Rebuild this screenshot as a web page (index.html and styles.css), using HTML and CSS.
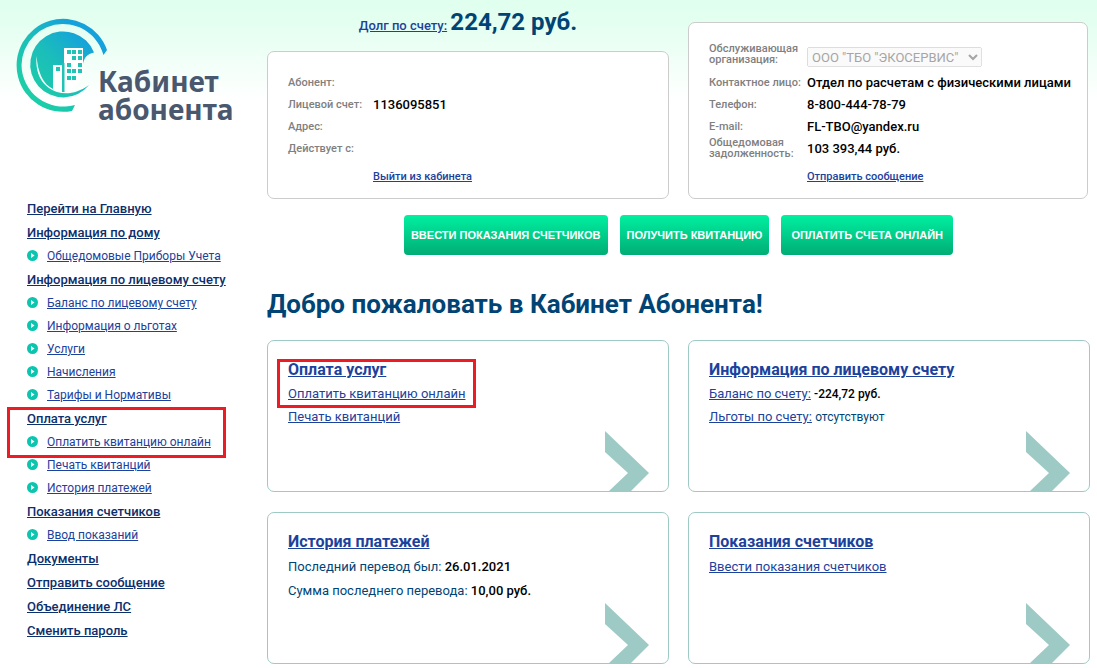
FILE: index.html
```html
<!DOCTYPE html>
<html lang="ru">
<head>
<meta charset="utf-8">
<title>Кабинет абонента</title>
<link rel="stylesheet" href="styles.css">
</head>
<body>
<div class="page">
  <aside class="sidebar">
    <svg class="logo" viewBox="0 0 240 115" role="img" aria-label="Кабинет абонента">
      <defs>
        <linearGradient id="brand" gradientUnits="userSpaceOnUse" x1="84" y1="22" x2="30" y2="76">
          <stop offset="0" stop-color="#14a1dc"/>
          <stop offset="0.5" stop-color="#1bbdbb"/>
          <stop offset="1" stop-color="#1bcda8"/>
        </linearGradient>
      </defs>
      <path fill="url(#brand)" d="M103.500 42 L107 37 A46.500 46.500 0 1 0 72 98 L75 92 A42 42 0 0 1 21.500 52 A41.500 41.500 0 0 1 62.500 11 C82 11 98 23 103.500 42Z"/>
      <path fill="url(#brand)" d="M94 39.500 A33 33 0 1 0 89 72 C78 80 67 82 57 79 C43 74 35 62 36.500 43 C38 60 43 71 53 76 L53 52 L62 52 L62 79 L64.500 79 L64.500 35 L83 35 L83 51 C84 45 87 41 94 39.500Z"/>
      <path fill="#fff" d="M53 52h9v27q-5 0-9-3zM64 35h19v25q-4 15-19 19z"/>
      <path fill="#20c3b4" d="M62 50h2.500v29H62z"/>
      <g fill="#20c3b4">
        <path d="M56 54h4v4h-4zM67 37h4v4h-4zM72 37h4v4h-4zM78 37h4v4h-4zM72 43h4v4h-4zM78 43h4v4h-4zM67 50h4v4h-4zM78 50h4v4h-4zM67 56h4v4h-4zM72 56h4v4h-4zM78 56h4v4h-4zM67 63h4v4h-4zM72 63h4v4h-4z"/>
      </g>
      <text class="logo-text" x="98" y="79">Кабинет</text>
      <text class="logo-text" x="98" y="107">абонента</text>
    </svg>
    <svg class="symbols" aria-hidden="true">
      <symbol id="bullet" viewBox="0 0 11 11"><circle cx="5.500" cy="5.500" r="5.500" fill="#0cc5ae"/><path d="M4 3 7.500 5.500 4 8z" fill="#fff"/></symbol>
    </svg>
    <nav class="menu">
      <div class="group"><a class="head" href="#">Перейти на Главную</a></div>
      <div class="group">
        <a class="head" href="#">Информация по дому</a>
        <div class="item"><svg class="bullet"><use href="#bullet"/></svg><a href="#">Общедомовые Приборы Учета</a></div>
      </div>
      <div class="group">
        <a class="head" href="#">Информация по лицевому счету</a>
        <div class="item"><svg class="bullet"><use href="#bullet"/></svg><a href="#">Баланс по лицевому счету</a></div>
        <div class="item"><svg class="bullet"><use href="#bullet"/></svg><a href="#">Информация о льготах</a></div>
        <div class="item"><svg class="bullet"><use href="#bullet"/></svg><a href="#">Услуги</a></div>
        <div class="item"><svg class="bullet"><use href="#bullet"/></svg><a href="#">Начисления</a></div>
        <div class="item"><svg class="bullet"><use href="#bullet"/></svg><a href="#">Тарифы и Нормативы</a></div>
      </div>
      <div class="group">
        <span class="mark mark-menu"></span>
        <a class="head" href="#">Оплата услуг</a>
        <div class="item"><svg class="bullet"><use href="#bullet"/></svg><a href="#">Оплатить квитанцию онлайн</a></div>
        <div class="item"><svg class="bullet"><use href="#bullet"/></svg><a href="#">Печать квитанций</a></div>
        <div class="item"><svg class="bullet"><use href="#bullet"/></svg><a href="#">История платежей</a></div>
      </div>
      <div class="group">
        <a class="head" href="#">Показания счетчиков</a>
        <div class="item"><svg class="bullet"><use href="#bullet"/></svg><a href="#">Ввод показаний</a></div>
      </div>
      <div class="group"><a class="head" href="#">Документы</a></div>
      <div class="group"><a class="head" href="#">Отправить сообщение</a></div>
      <div class="group"><a class="head" href="#">Объединение ЛС</a></div>
      <div class="group"><a class="head" href="#">Сменить пароль</a></div>
    </nav>
  </aside>
  <main class="main">
    <div class="top">
      <div class="account">
        <p class="debt"><a href="#">Долг по счету:</a> <strong>224,72 руб.</strong></p>
        <section class="panel panel-account">
          <dl class="info">
            <dt>Абонент:</dt><dd></dd>
            <dt>Лицевой счет:</dt><dd>1136095851</dd>
            <dt>Адрес:</dt><dd></dd>
            <dt>Действует с:</dt><dd></dd>
          </dl>
          <a class="panel-link" href="#">Выйти из кабинета</a>
        </section>
      </div>
      <section class="panel panel-company">
        <dl class="info">
          <dt class="tall"><label for="org">Обслуживающая организация:</label></dt>
          <dd class="tall"><select id="org" class="org" disabled><option>ООО "ТБО "ЭКОСЕРВИС"</option></select></dd>
          <dt>Контактное лицо:</dt><dd>Отдел по расчетам с физическими лицами</dd>
          <dt>Телефон:</dt><dd>8-800-444-78-79</dd>
          <dt>E-mail:</dt><dd>FL-TBO@yandex.ru</dd>
          <dt>Общедомовая задолженность:</dt><dd>103 393,44 руб.</dd>
        </dl>
        <a class="panel-link" href="#">Отправить сообщение</a>
      </section>
    </div>
    <div class="actions">
      <button type="button">ВВЕСТИ ПОКАЗАНИЯ СЧЕТЧИКОВ</button>
      <button type="button">ПОЛУЧИТЬ КВИТАНЦИЮ</button>
      <button type="button" class="pay">ОПЛАТИТЬ СЧЕТА ОНЛАЙН</button>
    </div>
    <h1>Добро пожаловать в Кабинет Абонента!</h1>
    <div class="cards">
      <section class="card">
        <span class="mark mark-card"></span>
        <h2><a href="#">Оплата услуг</a></h2>
        <p><a href="#">Оплатить квитанцию онлайн</a></p>
        <p><a href="#">Печать квитанций</a></p>
        <svg class="arrow" viewBox="0 0 44 60"><path d="M0 0 44 42 26 60H4L23 42 0 21z"/></svg>
      </section>
      <section class="card">
        <h2><a href="#">Информация по лицевому счету</a></h2>
        <p><a href="#">Баланс по счету:</a> <b class="value">-224,72 руб.</b></p>
        <p><a href="#">Льготы по счету:</a> <span class="value">отсутствуют</span></p>
        <svg class="arrow" viewBox="0 0 44 60"><path d="M0 0 44 42 26 60H4L23 42 0 21z"/></svg>
      </section>
      <section class="card spaced">
        <h2><a href="#">История платежей</a></h2>
        <p>Последний перевод был: <b>26.01.2021</b></p>
        <p>Сумма последнего перевода: <b>10,00 руб.</b></p>
        <svg class="arrow" viewBox="0 0 44 60"><path d="M0 0 44 42 26 60H4L23 42 0 21z"/></svg>
      </section>
      <section class="card spaced">
        <h2><a href="#">Показания счетчиков</a></h2>
        <p><a href="#">Ввести показания счетчиков</a></p>
        <svg class="arrow" viewBox="0 0 44 60"><path d="M0 0 44 42 26 60H4L23 42 0 21z"/></svg>
      </section>
    </div>
  </main>
</div>
</body>
</html>
```
FILE: styles.css
```css
* { box-sizing: border-box; }
body {
  margin: 0;
  background: #fff linear-gradient(#e0ffef, #e4fff1 24px, #fff 100px) no-repeat;
  font: 13px/23px Roboto, "Liberation Sans", sans-serif;
  color: #004475;
}
a { color: #1c429c; text-decoration: underline; }
p, h1, h2, dl, dd { margin: 0; }
.page { display: flex; }
.sidebar { flex: 0 0 267px; padding-top: 13px; }
.logo { display: block; width: 240px; height: 115px; margin-bottom: 69px; }
.logo-text { font: 700 28px/28px "Noto Sans", sans-serif; fill: #4a586f; }
.symbols { display: none; }
.menu { padding-left: 27px; }
.group { position: relative; }
.head { display: block; line-height: 24px; font-weight: 500; color: #0d2f6c; }
.item { display: flex; gap: 9px; font-size: 12px; line-height: 23px; }
.bullet { flex: none; width: 11px; height: 11px; margin-top: 5px; }
.mark { position: absolute; border: 3px solid #ed1c24; pointer-events: none; }
.mark-menu { left: -20px; top: 0; width: 219px; height: 51px; }
.mark-card { left: 9px; top: 18px; width: 199px; height: 49px; }

.main { flex: 1; min-width: 0; padding-right: 7px; }
.top { display: grid; grid-template-columns: 1fr 1fr; gap: 19px; }
.account { display: flex; flex-direction: column; }
.debt { height: 51px; padding-top: 6px; line-height: 32px; text-align: center; }
.debt strong { font-size: 24px; font-weight: 700; }
.debt a { font-weight: 500; }
.panel { border: 1px solid #ccc; border-radius: 7px; background: #fff; padding: 0 14px 10px 20px; }
.panel-account { flex: 1; padding-top: 20px; }
.panel-company { margin: 22px 2px 0 0; padding-top: 17px; }
.info { display: grid; grid-template-columns: 85px 1fr; grid-auto-rows: 22px; align-items: center; }
.panel-company .info { grid-template-columns: 98px 1fr; grid-template-rows: 32px; }
.info dt { padding-bottom: 2px; font-size: 11px; line-height: 11px; font-weight: 500; color: #808080; }
.info dd { line-height: 22px; font-weight: 500; color: #000; }
.info .tall { height: 32px; padding-top: 3px; }
.info dd.tall { display: flex; align-items: flex-end; padding-bottom: 5px; }
.org { width: 175px; height: 20px; font: 13px Roboto, sans-serif; }
.panel-link { display: block; margin: 6px 0 0 85px; font-size: 11px; line-height: 22px; font-weight: 500; }
.panel-company .panel-link { margin-left: 98px; }

.actions { display: flex; justify-content: center; gap: 12px; margin-top: 16px; }
.actions button {
  height: 40px; padding: 0 7px; border: 0; border-radius: 4px;
  background: linear-gradient(#00f0a0, #00ad75); color: #fff;
  font: 700 11px "Liberation Sans", Arial, sans-serif;
}
.actions .pay { padding: 0 10px; }
h1 { margin: 33px 0 19px; font-size: 26px; line-height: 33px; font-weight: 700; }
.cards { display: grid; grid-template-columns: 1fr 1fr; gap: 20px 19px; }
.card { position: relative; min-height: 152px; padding: 17px 20px; border: 1px solid #9ecac5; border-radius: 7px; }
.card h2 { font-size: 16px; line-height: 24px; font-weight: 700; }
.card .value { font-size: 12px; line-height: 1; }
.spaced h2 { margin-bottom: 1px; }
.spaced p { line-height: 24px; }
.card b { font-weight: 500; color: #000; }
.arrow { position: absolute; right: 19px; bottom: 0; width: 44px; height: 60px; fill: #9ecac5; }
```
